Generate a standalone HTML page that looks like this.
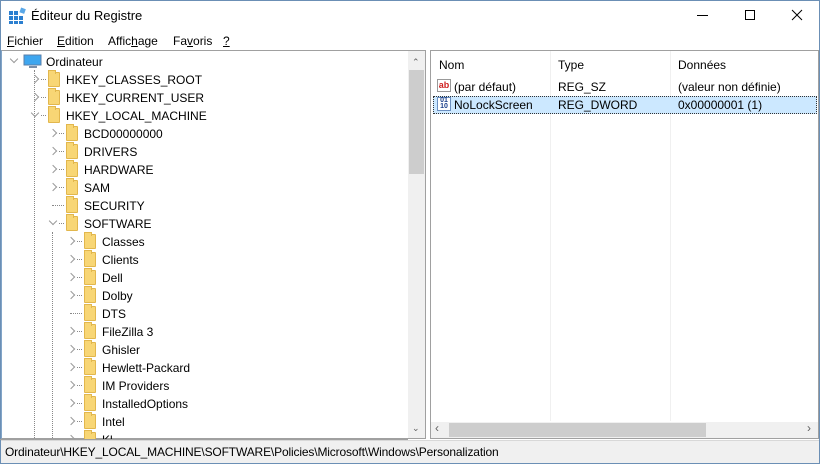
<!DOCTYPE html>
<html><head><meta charset="utf-8"><style>
*{margin:0;padding:0;box-sizing:border-box}
body{width:820px;height:464px;background:#fff;font-family:"Liberation Sans",sans-serif;font-size:12px;color:#000;position:relative;overflow:hidden}
.a{position:absolute;white-space:nowrap}
.f{position:absolute;width:12px;height:15px;background:#f8d675;border:1px solid #e2b74d;border-radius:1px}
.f:after{content:"";position:absolute;left:-1px;top:-3px;width:6px;height:3px;background:#f8d675;border:1px solid #e2b74d;border-bottom:none}
.ch{position:absolute;width:6px;height:6px;border-right:1.2px solid #9a9a9a;border-bottom:1.2px solid #9a9a9a}
.r{transform:rotate(-45deg)}
.d{transform:rotate(45deg)}
.dh{position:absolute;width:6px;border-top:1px dotted #888}
.dv{position:absolute;border-left:1px dotted #888}
</style></head><body>
<div class="a" style="left:0;top:0;width:820px;height:464px;border:1px solid #6b8fb5"></div>
<svg class="a" style="left:8px;top:7px" width="18" height="18" viewBox="0 0 18 18"><g fill="#2b7fd0"><rect x="1" y="4" width="4" height="4"/><rect x="6" y="4" width="4" height="4"/><rect x="1" y="9" width="4" height="4"/><rect x="6" y="9" width="4" height="4"/><rect x="11" y="9" width="4" height="4"/><rect x="1" y="14" width="4" height="3"/><rect x="6" y="14" width="4" height="3"/><rect x="11" y="14" width="4" height="3"/></g><rect x="12" y="1" width="5" height="5" fill="#5aa8e8" transform="rotate(20 14 4)"/></svg>
<div class="a" style="left:31px;top:8px;font-size:13px">Éditeur du Registre</div>
<div class="a" style="left:697px;top:15px;width:11px;border-top:1px solid #000"></div>
<div class="a" style="left:745px;top:10px;width:10px;height:10px;border:1px solid #000"></div>
<svg class="a" style="left:791px;top:9px" width="12" height="12"><path d="M1 1L11 11M11 1L1 11" stroke="#000" stroke-width="1"/></svg>
<div class="a" style="left:7px;top:34px"><u>F</u>ichier</div>
<div class="a" style="left:57px;top:34px"><u>E</u>dition</div>
<div class="a" style="left:108px;top:34px">Affic<u>h</u>age</div>
<div class="a" style="left:173px;top:34px">Fa<u>v</u>oris</div>
<div class="a" style="left:223px;top:34px"><u>?</u></div>
<div class="a" style="left:1px;top:50px;width:425px;height:389px;border:1px solid #a0a0a0;border-left-color:#82a5c8"></div>
<div class="a" style="left:408px;top:51px;width:17px;height:387px;background:#f0f0f0"></div>
<div class="a" style="left:409px;top:70px;width:15px;height:104px;background:#cdcdcd"></div>
<div class="a" style="left:412px;top:57px;font-size:9px;color:#606060">&#8963;</div>
<div class="a" style="left:412px;top:423px;font-size:9px;color:#606060">&#8964;</div>
<div class="a" style="left:430px;top:50px;width:389px;height:389px;border:1px solid #a0a0a0"></div>
<div class="a" style="left:550px;top:51px;height:370px;border-left:1px solid #f0f0f0"></div>
<div class="a" style="left:670px;top:51px;height:370px;border-left:1px solid #f0f0f0"></div>
<div class="a" style="left:439px;top:58px">Nom</div>
<div class="a" style="left:558px;top:58px">Type</div>
<div class="a" style="left:678px;top:58px">Données</div>
<div class="a" style="left:437px;top:79px;width:14px;height:13px;border:1px solid #999;background:#fff;font-size:9px;color:#d02020;font-weight:bold;line-height:10px;text-align:center">ab</div>
<div class="a" style="left:454px;top:80px">(par défaut)</div>
<div class="a" style="left:558px;top:80px">REG_SZ</div>
<div class="a" style="left:678px;top:80px">(valeur non définie)</div>
<div class="a" style="left:433px;top:96px;width:384px;height:18px;background:#cce8ff;border:1px dotted #333"></div>
<div class="a" style="left:437px;top:97px;width:14px;height:14px;border:1px solid #6b8fc0;background:#fff;font-size:7px;color:#1a3f8a;font-weight:bold;line-height:6px;text-align:center">01<br>10</div>
<div class="a" style="left:454px;top:98px">NoLockScreen</div>
<div class="a" style="left:558px;top:98px">REG_DWORD</div>
<div class="a" style="left:678px;top:98px">0x00000001 (1)</div>
<div class="a" style="left:431px;top:422px;width:387px;height:16px;background:#f0f0f0"></div>
<div class="a" style="left:449px;top:423px;width:257px;height:14px;background:#cdcdcd"></div>
<div class="a" style="left:435px;top:421px;font-size:12px;color:#606060">&#8249;</div>
<div class="a" style="left:807px;top:421px;font-size:12px;color:#606060">&#8250;</div>
<div class="ch d" style="left:11px;top:56px"></div>
<svg class="a" style="left:23px;top:54px" width="20" height="15"><rect x="1" y="1" width="17" height="10" fill="#3ea6ef" stroke="#5a7fa8"/><rect x="6" y="12" width="8" height="2" fill="#7a8ea8"/></svg>
<div class="a" style="left:46px;top:55px">Ordinateur</div>
<div class="dv" style="left:34px;top:70px;height:370px"></div>
<div class="dv" style="left:52px;top:232px;height:210px"></div>
<div id="t"></div>
<script>
var rows=[[1,'HKEY_CLASSES_ROOT','r'],[1,'HKEY_CURRENT_USER','r'],[1,'HKEY_LOCAL_MACHINE','d'],[2,'BCD00000000','r'],[2,'DRIVERS','r'],[2,'HARDWARE','r'],[2,'SAM','r'],[2,'SECURITY',''],[2,'SOFTWARE','d'],[3,'Classes','r'],[3,'Clients','r'],[3,'Dell','r'],[3,'Dolby','r'],[3,'DTS',''],[3,'FileZilla 3','r'],[3,'Ghisler','r'],[3,'Hewlett-Packard','r'],[3,'IM Providers','r'],[3,'InstalledOptions','r'],[3,'Intel','r'],[3,'Kl','r']];
var h='';
rows.forEach(function(r,i){var y=79+18*i,l=r[0],cx=17+18*l,fx=30+18*l,tx=48+18*l;
if(r[2]=='r')h+='<div class="ch r" style="left:'+(cx-3)+'px;top:'+(y-3)+'px"></div>';
if(r[2]=='d')h+='<div class="ch d" style="left:'+(cx-3)+'px;top:'+(y-5)+'px"></div>';
h+='<div class="dh" style="left:'+(r[2]?cx+6:cx-1)+'px;top:'+y+'px;width:'+(r[2]?5:12)+'px"></div>';
h+='<div class="f" style="left:'+fx+'px;top:'+(y-7)+'px"></div>';
h+='<div class="a" style="left:'+tx+'px;top:'+(y-6)+'px">'+r[1]+'</div>';});
document.getElementById('t').innerHTML=h;
</script>
<div class="a" style="left:0;top:439px;width:408px;height:1px;background:#a0a0a0"></div>
<div class="a" style="left:1px;top:440px;width:818px;height:23px;background:#f0f0f0;border-top:1px solid #d8d8d8"></div>
<div class="a" style="left:5px;top:445px;letter-spacing:-0.15px">Ordinateur\HKEY_LOCAL_MACHINE\SOFTWARE\Policies\Microsoft\Windows\Personalization</div>
</body></html>
